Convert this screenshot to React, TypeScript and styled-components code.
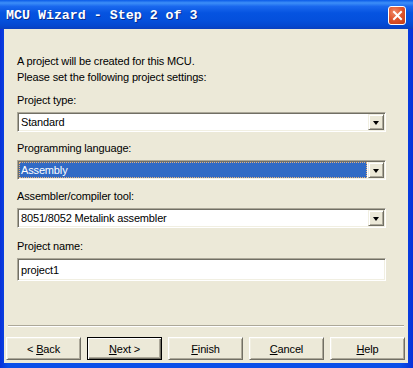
import React from 'react'
import styled, { createGlobalStyle } from 'styled-components'

const GlobalStyle = createGlobalStyle`
    html, body {
        margin: 0;
        padding: 0;
        overflow: hidden;
        background: #ffffff;
    }
`

const Window = styled.div`
    width: 413px;
    height: 368px;
    display: flex;
    flex-direction: column;
    background: linear-gradient(90deg, #0831d9 0%, #0a4ee8 2%, #0a4ee8 97%, #0831d9 100%);
    font-family: "Liberation Sans", Arial, sans-serif;
    font-size: 11px;
    letter-spacing: -0.15px;
    color: #000;
`

const TitleBar = styled.div`
    height: 29px;
    flex: none;
    display: flex;
    align-items: center;
    justify-content: space-between;
    padding: 0 7px 0 6px;
    box-sizing: border-box;
    background: linear-gradient(180deg, #0a5ae8 0%, #3d8ff8 10%, #1a68ee 22%, #0553e0 45%, #0450dc 70%, #0447cf 90%, #0a3fbd 100%);
`

const Title = styled.span`
    font-family: "Liberation Mono", "DejaVu Sans Mono", monospace;
    font-weight: bold;
    font-size: 13.3px;
    letter-spacing: 0;
    color: #fff;
    text-shadow: 1px 1px 0 #0a2c8a;
    padding-top: 1px;
`

const CloseButton = styled.div`
    width: 18px;
    height: 19px;
    margin-top: 1px;
    box-sizing: border-box;
    border: 1px solid #fff;
    border-radius: 3px;
    background: radial-gradient(circle at 35% 30%, #f08a68 0%, #e0562f 45%, #c23a12 100%);
    display: flex;
    align-items: center;
    justify-content: center;
`

const Body = styled.div`
    flex: 1;
    margin: 0 5px 5px 4px;
    background: #ece9d8;
    display: flex;
    flex-direction: column;
`

const Content = styled.div`
    padding: 24px 22px 0 13px;
    display: flex;
    flex-direction: column;
`

const Intro = styled.div`
    line-height: 16px;
    margin-bottom: 9px;
`

const Field = styled.div<{ $top?: number }>`
    display: flex;
    flex-direction: column;
    margin-top: ${p => p.$top ?? 0}px;
    margin-bottom: 10px;
`

const Label = styled.div`
    line-height: 13px;
    height: 13px;
    margin-bottom: 5px;
`

const Sunken = styled.div<{ $h: number }>`
    position: relative;
    height: ${p => p.$h}px;
    box-sizing: border-box;
    border: 1px solid;
    border-color: #aca899 #ffffff #ffffff #aca899;
    box-shadow: inset 1px 1px 0 #716f64, inset -1px -1px 0 #f1efe2;
    background: #fff;
    display: flex;
    align-items: center;
    padding: 1px 18px 1px 1px;
`

const ComboText = styled.div<{ $selected?: boolean }>`
    flex: 1;
    height: 100%;
    box-sizing: border-box;
    display: flex;
    align-items: center;
    padding-left: 2px;
    background: ${p => (p.$selected ? '#316ac5' : 'transparent')};
    color: ${p => (p.$selected ? '#fff' : '#000')};
    outline: ${p => (p.$selected ? '1px dotted #e8b27a' : 'none')};
    outline-offset: -1px;
`

const DropButton = styled.div`
    position: absolute;
    top: 1px;
    right: 1px;
    bottom: 1px;
    width: 16px;
    box-sizing: border-box;
    background: #ece9d8;
    border: 1px solid;
    border-color: #f1efe2 #716f64 #716f64 #f1efe2;
    box-shadow: inset 1px 1px 0 #ffffff, inset -1px -1px 0 #aca899;
    display: flex;
    align-items: center;
    justify-content: center;
    &::after {
        content: '';
        border-left: 3.5px solid transparent;
        border-right: 3.5px solid transparent;
        border-top: 4px solid #000;
        margin-top: 1px;
    }
`

const TextInput = styled(Sunken)`
    padding-right: 1px;
`

const InputText = styled.div`
    padding-left: 2px;
`

const Footer = styled.div`
    margin-top: auto;
    display: flex;
    flex-direction: column;
`

const Separator = styled.div`
    height: 1px;
    margin: 0 4px;
    background: #aca899;
    border-bottom: 1px solid #ffffff;
`

const ButtonRow = styled.div`
    display: flex;
    justify-content: space-between;
    padding: 0 3px 0 2px;
    margin: 10px 0 3px;
`

const Button = styled.div<{ $default?: boolean }>`
    width: 75px;
    height: 23px;
    box-sizing: border-box;
    display: flex;
    align-items: center;
    justify-content: center;
    background: #ece9d8;
    border: 1px solid;
    border-color: ${p => (p.$default ? '#000' : '#ffffff #716f64 #716f64 #ffffff')};
    box-shadow: ${p =>
        p.$default
            ? 'inset 1px 1px 0 #ffffff, inset -1px -1px 0 #716f64, inset -2px -2px 0 #aca899'
            : 'inset 1px 1px 0 #f1efe2, inset -1px -1px 0 #aca899'};
    span u {
        text-decoration: underline;
        text-underline-offset: 1px;
    }
`

const Combo = ({ value, selected }: { value: string, selected?: boolean }) => (
    <Sunken $h={20}>
        <ComboText $selected={selected}>{value}</ComboText>
        <DropButton />
    </Sunken>
)

const App = () => {
    return <>
        <GlobalStyle />
        <Window>
            <TitleBar>
                <Title>MCU Wizard - Step 2 of 3</Title>
                <CloseButton>
                    <svg width="11" height="11" viewBox="0 0 11 11">
                        <path d="M2 2 L9 9 M9 2 L2 9" stroke="#fff" strokeWidth="2" strokeLinecap="square" />
                    </svg>
                </CloseButton>
            </TitleBar>
            <Body>
                <Content>
                    <Intro>
                        <div>A project will be created for this MCU.</div>
                        <div>Please set the following project settings:</div>
                    </Intro>
                    <Field>
                        <Label>Project type:</Label>
                        <Combo value="Standard" />
                    </Field>
                    <Field>
                        <Label>Programming language:</Label>
                        <Combo value="Assembly" selected />
                    </Field>
                    <Field>
                        <Label>Assembler/compiler tool:</Label>
                        <Combo value="8051/8052 Metalink assembler" />
                    </Field>
                    <Field $top={2}>
                        <Label>Project name:</Label>
                        <TextInput $h={23}>
                            <InputText>project1</InputText>
                        </TextInput>
                    </Field>
                </Content>
                <Footer>
                    <Separator />
                    <ButtonRow>
                        <Button><span>&lt; <u>B</u>ack</span></Button>
                        <Button $default><span><u>N</u>ext &gt;</span></Button>
                        <Button><span><u>F</u>inish</span></Button>
                        <Button><span><u>C</u>ancel</span></Button>
                        <Button><span><u>H</u>elp</span></Button>
                    </ButtonRow>
                </Footer>
            </Body>
        </Window>
    </>
}

export default App
